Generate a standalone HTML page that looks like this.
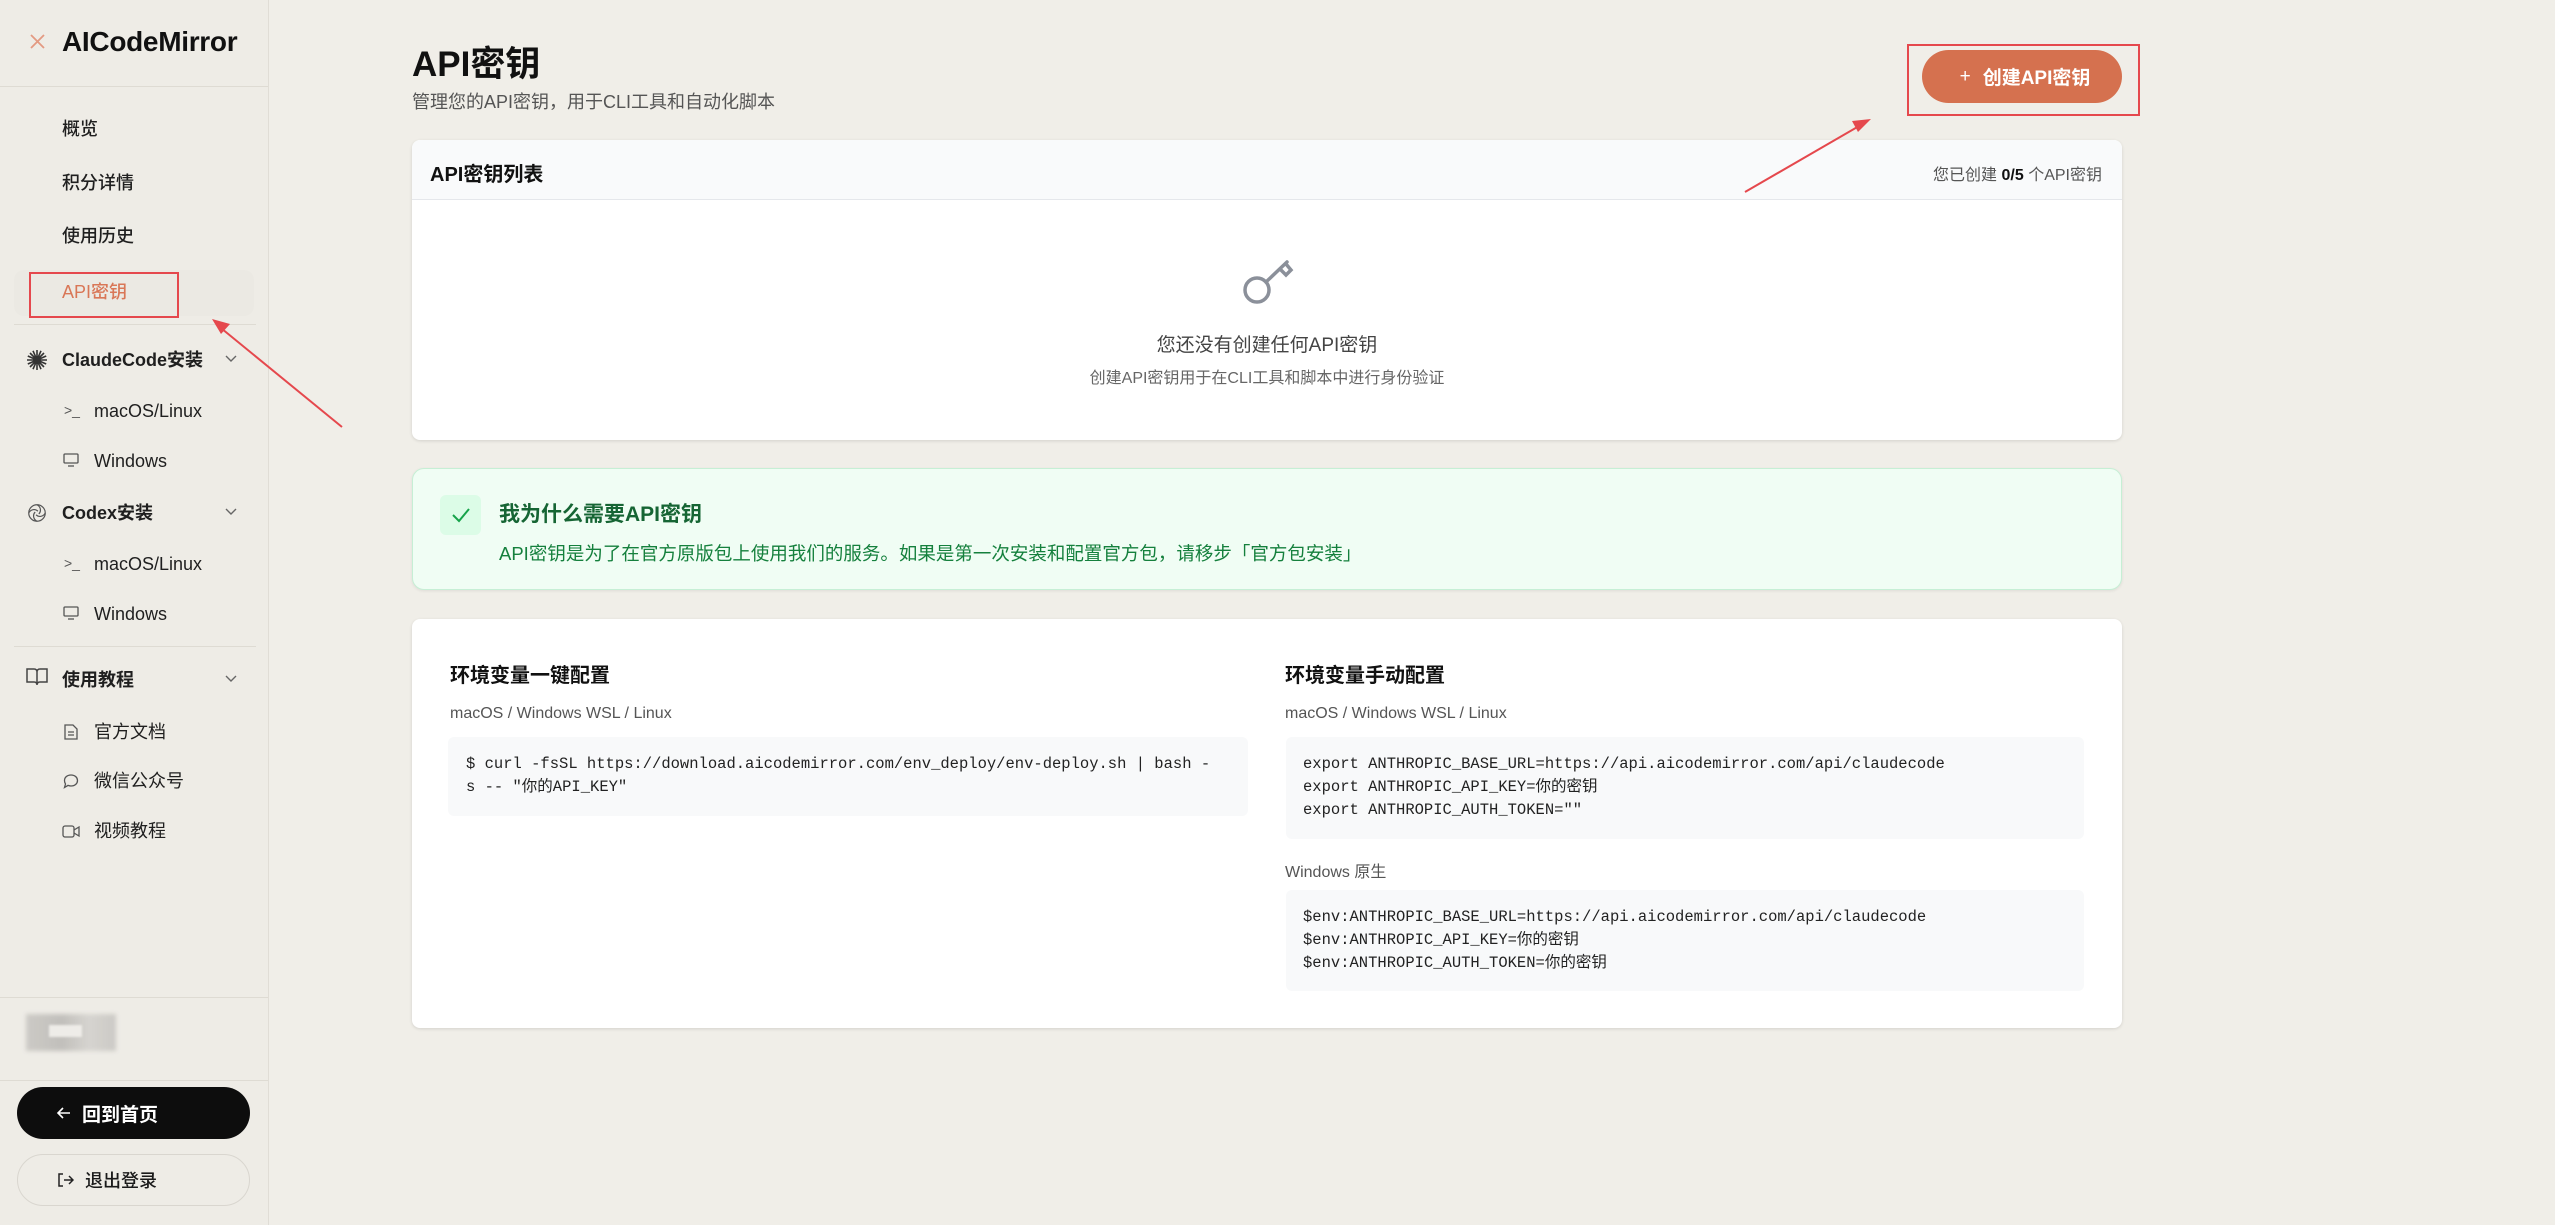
<!DOCTYPE html>
<html><head><meta charset="utf-8"><style>
*{box-sizing:border-box;margin:0;padding:0}
body{width:2555px;height:1225px;background:#f0eee8;font-family:"Liberation Sans","Noto Sans CJK SC",sans-serif;color:#1a1a1a;position:relative;overflow:hidden}
.a{position:absolute;white-space:nowrap}
.side{position:absolute;left:0;top:0;width:269px;height:1225px;background:#eeece6;border-right:1px solid #e0ddd6}
.nav{font-size:18px;font-weight:500;color:#1f1f1f;line-height:1}
.grp{font-size:18px;font-weight:700;color:#1f1f1f;line-height:1}
.sub{font-size:18px;color:#1f1f1f;line-height:1}
.mono{font-family:"Liberation Mono","Noto Sans CJK SC",monospace;font-size:15.5px;color:#222;line-height:23px;white-space:pre}
.card{position:absolute;background:#fff;border-radius:8px;box-shadow:0 1px 3px rgba(0,0,0,.12)}
.code{position:absolute;background:#f8f9fa;border-radius:6px}
.btn{display:flex;align-items:center;justify-content:center;gap:10px}
.lbtn{display:flex;align-items:center;gap:11px}
</style></head><body>
<div class="side">
  <svg class="a" style="left:29px;top:33px" width="17" height="17" viewBox="0 0 17 17"><path d="M2 2L15 15M15 2L2 15" stroke="#e39a82" stroke-width="1.8"/></svg>
  <div class="a" style="left:62px;top:26px;font-size:28px;font-weight:700;color:#111;letter-spacing:-0.3px">AICodeMirror</div>
  <div class="a" style="left:0;top:86px;width:268px;height:1px;background:#dedbd3"></div>
  <div class="a nav" style="left:62px;top:120px">概览</div>
  <div class="a nav" style="left:62px;top:174px">积分详情</div>
  <div class="a nav" style="left:62px;top:227px">使用历史</div>
  <div class="a" style="left:14px;top:270px;width:240px;height:46px;background:#ebe9e3;border-radius:10px"></div>
  <div class="a nav" style="left:62px;top:283px;color:#d97757">API密钥</div>
  <div class="a" style="left:29px;top:272px;width:150px;height:46px;border:2px solid #e5484d"></div>
  <div class="a" style="left:14px;top:324px;width:242px;height:1px;background:#dedbd3"></div>

  <svg class="a" style="left:26px;top:349px" width="22" height="22" viewBox="0 0 22 22"><g stroke="#333" stroke-width="1.6"><path d="M11 1V21M1 11H21M4 4L18 18M18 4L4 18M7 1.8L15 20.2M15 1.8L7 20.2M1.8 7L20.2 15M1.8 15L20.2 7"/></g></svg>
  <div class="a grp" style="left:62px;top:351px">ClaudeCode安装</div>
  <svg class="a" style="left:225px;top:355px" width="12" height="8" viewBox="0 0 12 8"><path d="M1 1L6 6L11 1" fill="none" stroke="#666" stroke-width="1.4"/></svg>
  <div class="a" style="left:64px;top:402px;font-size:14px;color:#555">&gt;_</div>
  <div class="a sub" style="left:94px;top:402px">macOS/Linux</div>
  <svg class="a" style="left:63px;top:453px" width="16" height="15" viewBox="0 0 16 15"><rect x="1" y="1" width="14" height="9" rx="1" fill="none" stroke="#555" stroke-width="1.3"/><path d="M5 13H11" stroke="#555" stroke-width="1.3"/></svg>
  <div class="a sub" style="left:94px;top:452px">Windows</div>

  <svg class="a" style="left:26px;top:502px" width="22" height="22" viewBox="0 0 24 24"><g fill="none" stroke="#555" stroke-width="1.3"><circle cx="12" cy="12" r="9"/><path d="M12 3C16 5 17 10 14 13M21 12C19 16 14 17 11 14M12 21C8 19 7 14 10 11M3 12C5 8 10 7 13 10"/></g></svg>
  <div class="a grp" style="left:62px;top:504px">Codex安装</div>
  <svg class="a" style="left:225px;top:508px" width="12" height="8" viewBox="0 0 12 8"><path d="M1 1L6 6L11 1" fill="none" stroke="#666" stroke-width="1.4"/></svg>
  <div class="a" style="left:64px;top:555px;font-size:14px;color:#555">&gt;_</div>
  <div class="a sub" style="left:94px;top:555px">macOS/Linux</div>
  <svg class="a" style="left:63px;top:606px" width="16" height="15" viewBox="0 0 16 15"><rect x="1" y="1" width="14" height="9" rx="1" fill="none" stroke="#555" stroke-width="1.3"/><path d="M5 13H11" stroke="#555" stroke-width="1.3"/></svg>
  <div class="a sub" style="left:94px;top:605px">Windows</div>
  <div class="a" style="left:14px;top:646px;width:242px;height:1px;background:#dedbd3"></div>

  <svg class="a" style="left:26px;top:667px" width="22" height="20" viewBox="0 0 22 20"><path d="M1 2H8C10 2 11 3 11 5V18C11 16 10 15 8 15H1ZM21 2H14C12 2 11 3 11 5V18C11 16 12 15 14 15H21Z" fill="none" stroke="#444" stroke-width="1.5"/></svg>
  <div class="a grp" style="left:62px;top:671px">使用教程</div>
  <svg class="a" style="left:225px;top:675px" width="12" height="8" viewBox="0 0 12 8"><path d="M1 1L6 6L11 1" fill="none" stroke="#666" stroke-width="1.4"/></svg>
  <svg class="a" style="left:64px;top:724px" width="14" height="16" viewBox="0 0 14 16"><path d="M1 1H9L13 5V15H1Z M4 8H10M4 11H10" fill="none" stroke="#555" stroke-width="1.3"/></svg>
  <div class="a sub" style="left:94px;top:723px">官方文档</div>
  <svg class="a" style="left:63px;top:773px" width="16" height="16" viewBox="0 0 16 16"><path d="M8 2C12 2 14.5 4.5 14.5 7.5S12 13 8 13C7 13 6 12.8 5 12.4L1.5 14.5L2.5 11C1.8 10 1.5 8.8 1.5 7.5C1.5 4.5 4 2 8 2Z" fill="none" stroke="#555" stroke-width="1.3"/></svg>
  <div class="a sub" style="left:94px;top:772px">微信公众号</div>
  <svg class="a" style="left:62px;top:825px" width="18" height="13" viewBox="0 0 18 13"><rect x="1" y="1" width="11" height="11" rx="2" fill="none" stroke="#555" stroke-width="1.3"/><path d="M12 5L17 2V11L12 8" fill="none" stroke="#555" stroke-width="1.3"/></svg>
  <div class="a sub" style="left:94px;top:822px">视频教程</div>

  <div class="a" style="left:0;top:997px;width:268px;height:1px;background:#dedbd3"></div>
  <div class="a" style="left:26px;top:1014px;width:90px;height:37px;background:linear-gradient(90deg,#c9c7c3,#bdbbb7 40%,#d4d2ce 70%,#c8c6c2);filter:blur(2px);opacity:.9"></div>
  <div class="a" style="left:49px;top:1025px;width:33px;height:12px;background:#eeece8;filter:blur(1px)"></div>
  <div class="a" style="left:0;top:1080px;width:268px;height:1px;background:#dedbd3"></div>
  <div class="a lbtn" style="left:17px;top:1087px;width:233px;height:52px;background:#0d0d0d;border-radius:26px;padding-left:39px">
    <svg width="15" height="14" viewBox="0 0 15 14"><path d="M14 7H2M7 2L2 7L7 12" fill="none" stroke="#fff" stroke-width="1.6"/></svg>
    <span style="font-size:19px;font-weight:700;color:#fff">回到首页</span></div>
  <div class="a lbtn" style="left:17px;top:1154px;width:233px;height:52px;border:1.5px solid #d9d6cf;border-radius:26px;padding-left:39px">
    <svg width="17" height="16" viewBox="0 0 17 16"><path d="M6 2H2V14H6M7 8H16M12 4L16 8L12 12" fill="none" stroke="#222" stroke-width="1.5"/></svg>
    <span style="font-size:18px;font-weight:500;color:#1a1a1a">退出登录</span></div>
</div>

<div class="a" style="left:412px;top:36px;font-size:35px;font-weight:700;color:#111">API密钥</div>
<div class="a" style="left:412px;top:88px;font-size:18px;color:#555">管理您的API密钥，用于CLI工具和自动化脚本</div>
<div class="a btn" style="left:1922px;top:50px;width:200px;height:53px;background:#d5714f;border-radius:27px;gap:12px;padding-left:6px">
  <span style="font-size:19px;color:#fff">+</span><span style="font-size:19px;color:#fff;font-weight:700">创建API密钥</span></div>
<div class="a" style="left:1907px;top:44px;width:233px;height:72px;border:2.5px solid #e5484d"></div>

<div class="card" style="left:412px;top:140px;width:1710px;height:300px;overflow:hidden">
  <div class="a" style="left:0;top:0;width:1710px;height:60px;background:#f9fafb;border-bottom:1px solid #e5e7eb"></div>
  <div class="a" style="left:18px;top:18px;font-size:20px;font-weight:700;color:#111">API密钥列表</div>
  <div class="a" style="right:20px;top:21px;font-size:16px;color:#555">您已创建 <b style="color:#111">0/5</b> 个API密钥</div>
  <svg class="a" style="left:828px;top:112px" width="60" height="56" viewBox="0 0 60 56"><g fill="none" stroke="#8b909a" stroke-width="3.5" stroke-linecap="round"><circle cx="17" cy="38" r="12"/><path d="M26 30L47 10M40 17L46 23L51 18L46 12"/></g></svg>
  <div class="a" style="left:0;width:1710px;text-align:center;top:190px;font-size:19px;color:#444">您还没有创建任何API密钥</div>
  <div class="a" style="left:0;width:1710px;text-align:center;top:224px;font-size:16px;color:#666">创建API密钥用于在CLI工具和脚本中进行身份验证</div>
</div>

<div class="a" style="left:412px;top:468px;width:1710px;height:122px;background:#f0fdf4;border:1.5px solid #c6efd5;border-radius:12px;box-shadow:0 1px 3px rgba(0,0,0,.08)"></div>
<div class="a" style="left:440px;top:495px;width:41px;height:40px;background:#dcfce7;border-radius:6px"></div>
<svg class="a" style="left:451px;top:506px" width="20" height="18" viewBox="0 0 20 18"><path d="M2 9L8 15L18 3" fill="none" stroke="#16a34a" stroke-width="2"/></svg>
<div class="a" style="left:499px;top:498px;font-size:21px;font-weight:700;color:#166534">我为什么需要API密钥</div>
<div class="a" style="left:499px;top:540px;font-size:18.5px;color:#15803d">API密钥是为了在官方原版包上使用我们的服务。如果是第一次安装和配置官方包，请移步「官方包安装」</div>

<div class="card" style="left:412px;top:619px;width:1710px;height:409px"></div>
<div class="a" style="left:450px;top:659px;font-size:20px;font-weight:700;color:#111">环境变量一键配置</div>
<div class="a" style="left:450px;top:705px;font-size:16px;color:#555">macOS / Windows WSL / Linux</div>
<div class="code" style="left:448px;top:737px;width:800px;height:79px"></div>
<div class="a mono" style="left:466px;top:753px">$ curl -fsSL https://download.aicodemirror.com/env_deploy/env-deploy.sh | bash -
s -- "你的API_KEY"</div>

<div class="a" style="left:1285px;top:659px;font-size:20px;font-weight:700;color:#111">环境变量手动配置</div>
<div class="a" style="left:1285px;top:705px;font-size:16px;color:#555">macOS / Windows WSL / Linux</div>
<div class="code" style="left:1286px;top:737px;width:798px;height:102px"></div>
<div class="a mono" style="left:1303px;top:753px">export ANTHROPIC_BASE_URL=https://api.aicodemirror.com/api/claudecode
export ANTHROPIC_API_KEY=你的密钥
export ANTHROPIC_AUTH_TOKEN=""</div>
<div class="a" style="left:1285px;top:858px;font-size:16px;color:#555">Windows 原生</div>
<div class="code" style="left:1286px;top:890px;width:798px;height:101px"></div>
<div class="a mono" style="left:1303px;top:906px">$env:ANTHROPIC_BASE_URL=https://api.aicodemirror.com/api/claudecode
$env:ANTHROPIC_API_KEY=你的密钥
$env:ANTHROPIC_AUTH_TOKEN=你的密钥</div>

<svg class="a" style="left:0;top:0" width="2555" height="1225" viewBox="0 0 2555 1225">
  <path d="M342 427L216 324" stroke="#e5484d" stroke-width="2"/>
  <path d="M212 319L230 324L221 334Z" fill="#e5484d"/>
  <path d="M1745 192L1866 122" stroke="#e5484d" stroke-width="2"/>
  <path d="M1871 119L1858 132L1852 121Z" fill="#e5484d"/>
</svg>
</body></html>
